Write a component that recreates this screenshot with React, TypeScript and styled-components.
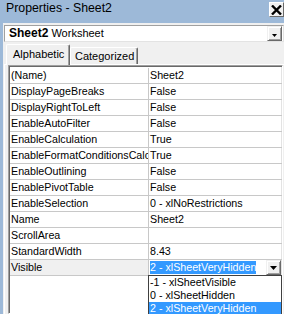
import React from 'react';
import styled, { createGlobalStyle } from 'styled-components';

const GlobalStyle = createGlobalStyle`
  html, body {
    margin: 0;
    padding: 0;
    background: #f0f0f0;
  }
  body {
    font-family: "Liberation Sans", Arial, sans-serif;
    font-size: 10.7px;
    color: #000;
  }
`;

const Window = styled.div`
  width: 284px;
  height: 314px;
  overflow: hidden;
  box-sizing: border-box;
  padding-left: 3px;
  background: #9db9d8;
  display: flex;
  flex-direction: column;
`;

const TitleBar = styled.div`
  height: 23px;
  flex-shrink: 0;
  display: flex;
  justify-content: space-between;
  align-items: flex-start;
`;

const Title = styled.div`
  padding: 1px 0 0 3px;
  font-size: 12.3px;
  line-height: 14px;
  color: #000;
`;

const CloseButton = styled.div`
  margin-top: 2px;
  width: 15px;
  height: 15px;
  box-sizing: border-box;
  background: #f0f0f0;
  border: 1px solid;
  border-color: #ffffff #696969 #696969 #ffffff;
  display: flex;
  align-items: center;
  justify-content: center;
`;

const Content = styled.div`
  flex: 1;
  min-height: 0;
  background: #f0f0f0;
  display: flex;
  flex-direction: column;
`;

const ObjectCombo = styled.div`
  margin: 2px 0 0 1px;
  height: 17px;
  box-sizing: border-box;
  border: 1px solid;
  border-color: #a0a0a0 #e3e3e3 #e3e3e3 #a0a0a0;
  background: #fff;
  display: flex;
  align-items: center;
`;

const ComboText = styled.div`
  flex: 1;
  padding-left: 4px;
  font-size: 11px;
  line-height: 15px;
  white-space: nowrap;
`;

const ComboName = styled.b`
  font-size: 12px;
`;

const DropButton = styled.div<{ $h: number }>`
  width: 15px;
  height: ${(p) => p.$h}px;
  margin-right: 1px;
  box-sizing: border-box;
  background: #f0f0f0;
  border: 1px solid;
  border-color: #f0f0f0 #696969 #696969 #f0f0f0;
  box-shadow: inset 1px 1px 0 #ffffff, inset -1px -1px 0 #a0a0a0;
  display: flex;
  align-items: center;
  justify-content: center;
  flex-shrink: 0;
`;

const TabStrip = styled.div`
  margin-top: 2px;
  height: 20px;
  padding-left: 3px;
  display: flex;
  align-items: flex-end;
  flex-shrink: 0;
`;

const Tab = styled.div<{ $active?: boolean; $w: number }>`
  position: relative;
  z-index: ${(p) => (p.$active ? 1 : 0)};
  width: ${(p) => p.$w}px;
  height: ${(p) => (p.$active ? 21 : 17)}px;
  margin-bottom: ${(p) => (p.$active ? -1 : 0)}px;
  box-sizing: border-box;
  padding-left: ${(p) => (p.$active ? 6 : 4)}px;
  padding-bottom: ${(p) => (p.$active ? 2 : 0)}px;
  background: #f0f0f0;
  border-top: 1px solid #ffffff;
  border-left: 1px solid #ffffff;
  border-right: 1px solid #696969;
  border-radius: 2px 2px 0 0;
  box-shadow: inset -1px 0 0 #a0a0a0;
  display: flex;
  align-items: center;
  font-size: 11px;
  white-space: nowrap;
`;

const TabPage = styled.div`
  flex: 1;
  min-height: 0;
  margin-left: 1px;
  padding: 0 1px 0 3px;
  border-top: 1px solid #ffffff;
  border-left: 1px solid #ffffff;
  display: flex;
  flex-direction: column;
`;

const Grid = styled.div`
  flex: 1;
  min-height: 0;
  background: #fff;
  padding: 2px 0 0 1px;
  border: 1px solid;
  border-color: #a0a0a0 #ffffff #ffffff #a0a0a0;
  box-shadow: inset 1px 1px 0 #696969, inset -1px 0 0 #e3e3e3;
`;

const Row = styled.div`
  height: 16px;
  box-sizing: border-box;
  border-bottom: 1px solid #c8c8c8;
  display: grid;
  grid-template-columns: 139px 1fr;
`;

const NameCell = styled.div<{ $selected?: boolean }>`
  border-right: 1px solid #c8c8c8;
  padding-left: 1px;
  line-height: 15px;
  overflow: hidden;
  white-space: nowrap;
  text-overflow: clip;
  background: ${(p) => (p.$selected ? '#f0f0f0' : 'transparent')};
`;

const ValueCell = styled.div`
  position: relative;
  padding-left: 1px;
  line-height: 15px;
  white-space: nowrap;
  display: flex;
  align-items: center;
`;

const SelectedText = styled.span`
  flex: 0 0 auto;
  height: 13px;
  line-height: 13px;
  background: #3399ff;
  color: #fff;
`;

const Spacer = styled.div`
  flex: 1;
`;

const DropList = styled.div`
  position: absolute;
  top: 100%;
  left: -1px;
  right: 0;
  z-index: 2;
  background: #fff;
  border: 1px solid #404040;
`;

const ListItem = styled.div<{ $selected?: boolean }>`
  height: 13px;
  line-height: 13px;
  padding-left: 1px;
  white-space: nowrap;
  background: ${(p) => (p.$selected ? '#3399ff' : '#fff')};
  color: ${(p) => (p.$selected ? '#fff' : '#000')};
`;

const props: [string, string][] = [
  ['(Name)', 'Sheet2'],
  ['DisplayPageBreaks', 'False'],
  ['DisplayRightToLeft', 'False'],
  ['EnableAutoFilter', 'False'],
  ['EnableCalculation', 'True'],
  ['EnableFormatConditionsCalculation', 'True'],
  ['EnableOutlining', 'False'],
  ['EnablePivotTable', 'False'],
  ['EnableSelection', '0 - xlNoRestrictions'],
  ['Name', 'Sheet2'],
  ['ScrollArea', ''],
  ['StandardWidth', '8.43'],
];

const Arrow = ({ w, h }: { w: number; h: number }) => (
  <svg width={w} height={h} viewBox={`0 0 ${w} ${h}`}>
    <polygon points={`0,0 ${w},0 ${w / 2},${h}`} fill="#000" />
  </svg>
);

export default function App() {
  return (
    <>
      <GlobalStyle />
      <Window>
        <TitleBar>
          <Title>Properties - Sheet2</Title>
          <CloseButton>
            <svg width="11" height="10" viewBox="0 0 11 10">
              <path d="M1 0.5 L10 9.5 M10 0.5 L1 9.5" stroke="#000" strokeWidth="2.4" />
            </svg>
          </CloseButton>
        </TitleBar>
        <Content>
          <ObjectCombo>
            <ComboText>
              <ComboName>Sheet2</ComboName> Worksheet
            </ComboText>
            <DropButton $h={15}>
              <svg width="5" height="3" viewBox="0 0 5 3" style={{ marginTop: 3 }}>
                <polygon points="0,0 5,0 2.5,3" fill="#000" />
              </svg>
            </DropButton>
          </ObjectCombo>
          <TabStrip>
            <Tab $active $w={64}>Alphabetic</Tab>
            <Tab $w={68}>Categorized</Tab>
          </TabStrip>
          <TabPage>
            <Grid>
              {props.map(([name, value]) => (
                <Row key={name}>
                  <NameCell>{name}</NameCell>
                  <ValueCell>{value}</ValueCell>
                </Row>
              ))}
              <Row>
                <NameCell $selected>Visible</NameCell>
                <ValueCell>
                  <SelectedText>2 - xlSheetVeryHidden</SelectedText>
                  <Spacer />
                  <DropButton $h={15}>
                    <Arrow w={7} h={4} />
                  </DropButton>
                  <DropList>
                    <ListItem>-1 - xlSheetVisible</ListItem>
                    <ListItem>0 - xlSheetHidden</ListItem>
                    <ListItem $selected>2 - xlSheetVeryHidden</ListItem>
                  </DropList>
                </ValueCell>
              </Row>
            </Grid>
          </TabPage>
        </Content>
      </Window>
    </>
  );
}
